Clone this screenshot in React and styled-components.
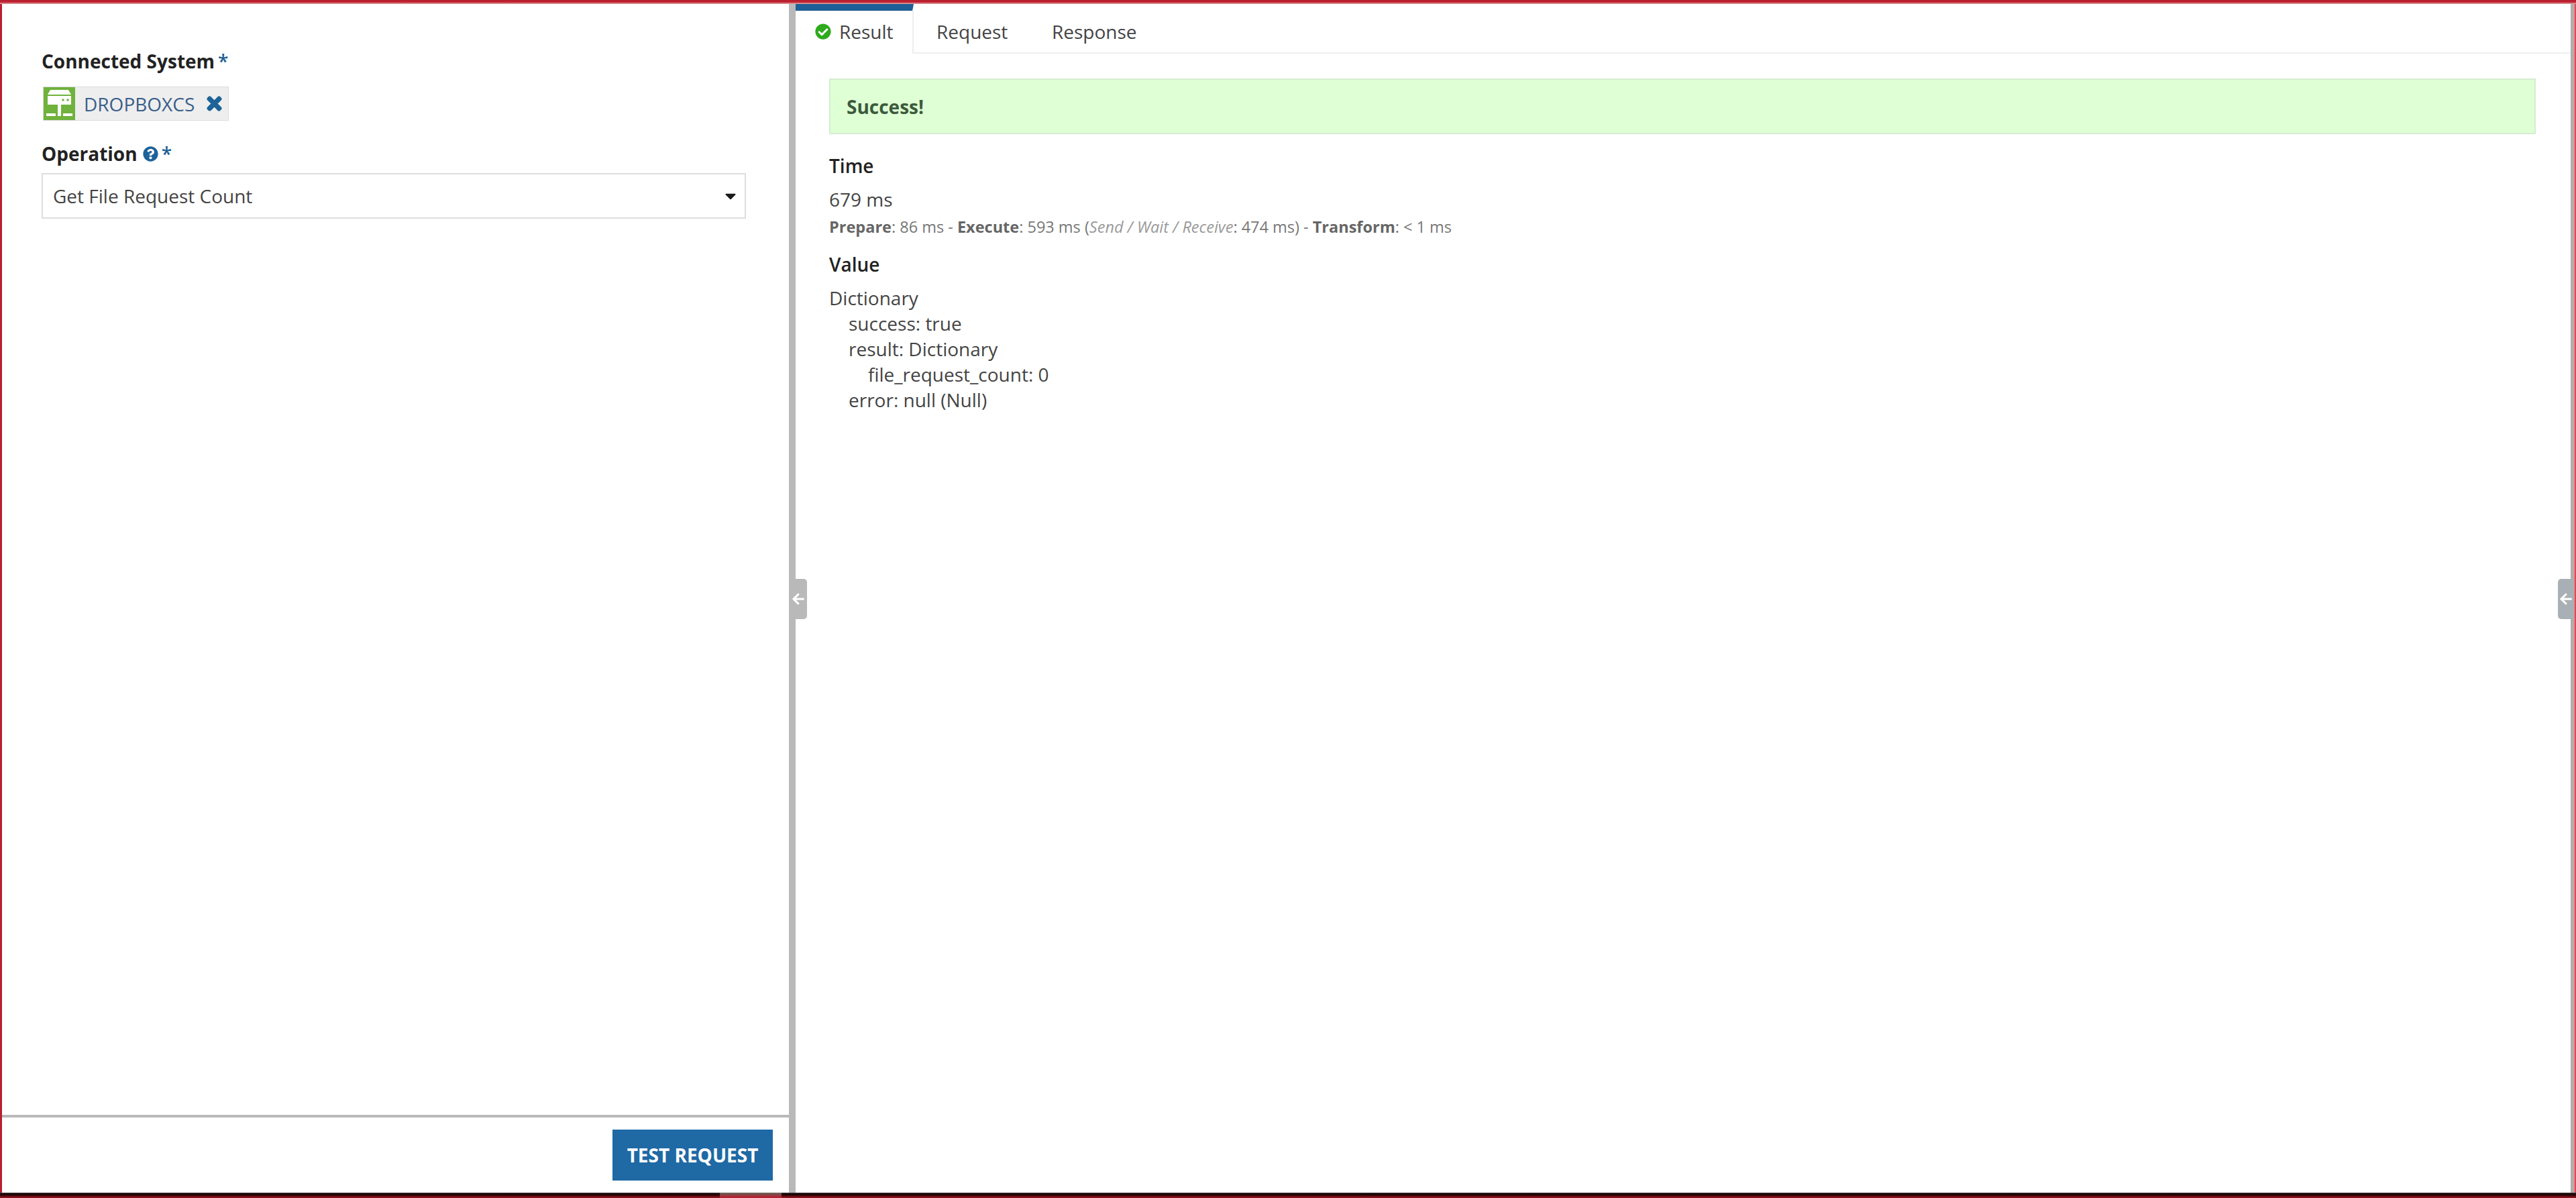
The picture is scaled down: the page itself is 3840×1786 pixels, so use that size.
import React from 'react';
import styled, { createGlobalStyle } from 'styled-components';
import { FaCheckCircle, FaQuestionCircle, FaTimes, FaArrowLeft, FaCaretDown } from 'react-icons/fa';

const GlobalStyle = createGlobalStyle`
  html, body {
    margin: 0;
    padding: 0;
    background: #fff;
  }
  body {
    font-family: "Open Sans", "Noto Sans", sans-serif;
    color: #333;
  }
`;

const Page = styled.div`
  width: 3840px;
  height: 1786px;
  display: flex;
  flex-direction: column;
  overflow: hidden;
  position: relative;
`;

const TopEdge = styled.div`
  height: 6px;
  flex: none;
  background: linear-gradient(#b5202f 0, #c0202f 50%, #e0b4b4 100%);
`;

const BottomEdge = styled.div`
  height: 8px;
  flex: none;
  display: flex;
`;

const EdgeDark = styled.div`
  flex: ${props => (props.$width ? 'none' : 1)};
  width: ${props => props.$width}px;
  background: linear-gradient(#555 0, #140404 20%, #2c0508 45%, #a5141f 100%);
`;

const EdgeLight = styled.div`
  flex: none;
  width: ${props => props.$width}px;
  background: linear-gradient(#6c6c60 0, #7a4a48 35%, #b02a3a 70%, #b02030 100%);
`;

const Body = styled.div`
  flex: 1;
  display: flex;
  min-height: 0;
`;

const LeftEdge = styled.div`
  width: 3px;
  flex: none;
  background: #b8202f;
`;

const RightEdge = styled.div`
  width: 8px;
  flex: none;
  background: linear-gradient(90deg, #a9b0b0 0, #a9b0b0 40%, #e89a9a 60%, #d03040 100%);
`;

const LeftPane = styled.div`
  width: 1173px;
  flex: none;
  display: flex;
  flex-direction: column;
`;

const Form = styled.div`
  flex: 1;
  padding: 66px 64px 0 59px;
`;

const Label = styled.div`
  display: flex;
  align-items: center;
  font-size: 28px;
  line-height: 38px;
  font-weight: 700;
  color: #222;
`;

const Required = styled.span`
  color: #1d5f96;
  font-weight: 600;
  margin-left: 5px;
`;

const HelpIcon = styled(FaQuestionCircle)`
  color: #1d6399;
  font-size: 23px;
  margin-left: 8px;
`;

const Chip = styled.div`
  margin: 19px 0 0 2px;
  width: 277px;
  height: 51px;
  box-sizing: border-box;
  display: flex;
  align-items: center;
  background: #eeeeee;
  border: 1px solid #dcdcdc;
`;

const ChipLogo = styled.svg`
  width: 47px;
  height: 49px;
  flex: none;
`;

const ChipText = styled.span`
  margin-left: 13px;
  font-size: 28px;
  color: #3a5f8a;
`;

const ChipClose = styled(FaTimes)`
  margin-left: 15px;
  color: #1d6399;
  font-size: 29px;
  stroke: currentColor;
  stroke-width: 36;
`;

const OperationField = styled.div`
  margin-top: 30px;
`;

const Select = styled.div`
  margin-top: 10px;
  height: 68px;
  box-sizing: border-box;
  display: flex;
  align-items: center;
  justify-content: space-between;
  padding: 0 8px 0 15px;
  border: 2px solid #dedede;
  font-size: 28px;
  color: #444;
`;

const Caret = styled(FaCaretDown)`
  color: #1a1a1a;
  font-size: 26px;
`;

const Footer = styled.div`
  height: 116px;
  flex: none;
  box-sizing: border-box;
  border-top: 4px solid #b9b9b9;
  display: flex;
  justify-content: flex-end;
  align-items: flex-start;
  padding: 18px 24px 0 0;
`;

const TestButton = styled.button`
  width: 239px;
  height: 76px;
  border: none;
  background: #1f69a5;
  color: #fff;
  font-family: inherit;
  font-size: 28px;
  font-weight: 700;
`;

const Divider = styled.div`
  width: 10px;
  flex: none;
  background: #b9b9b9;
`;

const RightPane = styled.div`
  flex: 1;
  min-width: 0;
`;

const TabBar = styled.div`
  height: 74px;
  box-sizing: border-box;
  display: flex;
  border-bottom: 2px solid #eeeeee;
`;

const Tab = styled.div`
  display: flex;
  align-items: center;
  box-sizing: border-box;
  height: 74px;
  width: ${props => props.$width}px;
  padding-left: ${props => props.$pad}px;
  font-size: 28px;
  color: #444;
  background: ${props => (props.$active ? '#fff' : 'transparent')};
  border-top: 10px solid ${props => (props.$active ? '#1d5f96' : 'transparent')};
  border-right: ${props => (props.$active ? '2px solid #eeeeee' : 'none')};
  padding-bottom: 10px;
  padding-top: 8px;
`;

const CheckIcon = styled(FaCheckCircle)`
  color: #2eaa1c;
  font-size: 24px;
  margin-right: 12px;
`;

const Content = styled.div`
  padding: 37px 52px 0 50px;
`;

const SuccessBox = styled.div`
  height: 83px;
  box-sizing: border-box;
  display: flex;
  align-items: center;
  padding-left: 24px;
  background: #dfffd5;
  border: 2px solid #d5ecd0;
  font-size: 28px;
  font-weight: 700;
  color: #3c5a3c;
`;

const Heading = styled.div`
  font-size: 28px;
  line-height: 38px;
  font-weight: 600;
  color: #222;
  margin-top: ${props => props.$top}px;
`;

const Plain = styled.div`
  font-size: 28px;
  line-height: 38px;
  color: #444;
  padding-left: ${props => (props.$level || 0) * 29}px;
`;

const TimeValue = styled(Plain)`
  margin-top: 12px;
`;

const Breakdown = styled.div`
  font-size: 23.5px;
  line-height: 30px;
  color: #777;
  margin-top: 7px;

  b {
    font-weight: 700;
    color: #666;
  }
  i {
    color: #999;
  }
`;

const ValueList = styled.div`
  margin-top: 12px;
`;

const Handle = styled.div`
  position: absolute;
  top: 863px;
  left: ${props => props.$left}px;
  width: ${props => props.$width}px;
  height: 60px;
  background: ${props => props.$color};
  border-radius: ${props => props.$radius};
  display: flex;
  align-items: center;
  justify-content: center;
  color: #fff;
  font-size: 20px;
`;

const ServerLogo = () => (
  <ChipLogo viewBox="0 0 47 49">
    <rect width="47" height="49" fill="#6fb23c" />
    <path d="M10 4h27l4 7v15H6V11z" fill="#fff" />
    <rect x="6" y="11" width="35" height="2" fill="#6fb23c" />
    <circle cx="29" cy="19" r="1.8" fill="#6fb23c" />
    <circle cx="36" cy="19" r="1.8" fill="#6fb23c" />
    <rect x="21" y="26" width="5" height="13" fill="#fff" />
    <rect x="4" y="39" width="14" height="4" fill="#fff" />
    <rect x="21" y="39" width="5" height="4" fill="#fff" />
    <rect x="29" y="39" width="14" height="4" fill="#fff" />
  </ChipLogo>
);

export default function App() {
  return (
    <Page>
      <GlobalStyle />
      <TopEdge />
      <Body>
        <LeftEdge />
        <LeftPane>
          <Form>
            <Label>
              Connected System<Required>*</Required>
            </Label>
            <Chip>
              <ServerLogo />
              <ChipText>DROPBOXCS</ChipText>
              <ChipClose />
            </Chip>
            <OperationField>
              <Label>
                Operation<HelpIcon /><Required>*</Required>
              </Label>
              <Select>
                Get File Request Count
                <Caret />
              </Select>
            </OperationField>
          </Form>
          <Footer>
            <TestButton>TEST REQUEST</TestButton>
          </Footer>
        </LeftPane>
        <Divider />
        <RightPane>
          <TabBar>
            <Tab $active $width={176} $pad={29}>
              <CheckIcon />
              Result
            </Tab>
            <Tab $width={190} $pad={34}>Request</Tab>
            <Tab $width={200} $pad={16}>Response</Tab>
          </TabBar>
          <Content>
            <SuccessBox>Success!</SuccessBox>
            <Heading $top={28}>Time</Heading>
            <TimeValue>679 ms</TimeValue>
            <Breakdown>
              <b>Prepare</b>: 86 ms - <b>Execute</b>: 593 ms (<i>Send / Wait / Receive</i>: 474 ms) - <b>Transform</b>: &lt; 1 ms
            </Breakdown>
            <Heading $top={22}>Value</Heading>
            <ValueList>
              <Plain>Dictionary</Plain>
              <Plain $level={1}>success: true</Plain>
              <Plain $level={1}>result: Dictionary</Plain>
              <Plain $level={2}>file_request_count: 0</Plain>
              <Plain $level={1}>error: null (Null)</Plain>
            </ValueList>
          </Content>
        </RightPane>
        <RightEdge />
      </Body>
      <BottomEdge>
        <EdgeDark $width={1073} />
        <EdgeLight $width={92} />
        <EdgeDark />
      </BottomEdge>
      <Handle $left={1176} $width={27} $color="#b9b9b9" $radius="0 5px 5px 0"><FaArrowLeft /></Handle>
      <Handle $left={3813} $width={24} $color="#a9b0b5" $radius="5px 0 0 5px"><FaArrowLeft /></Handle>
    </Page>
  );
}
